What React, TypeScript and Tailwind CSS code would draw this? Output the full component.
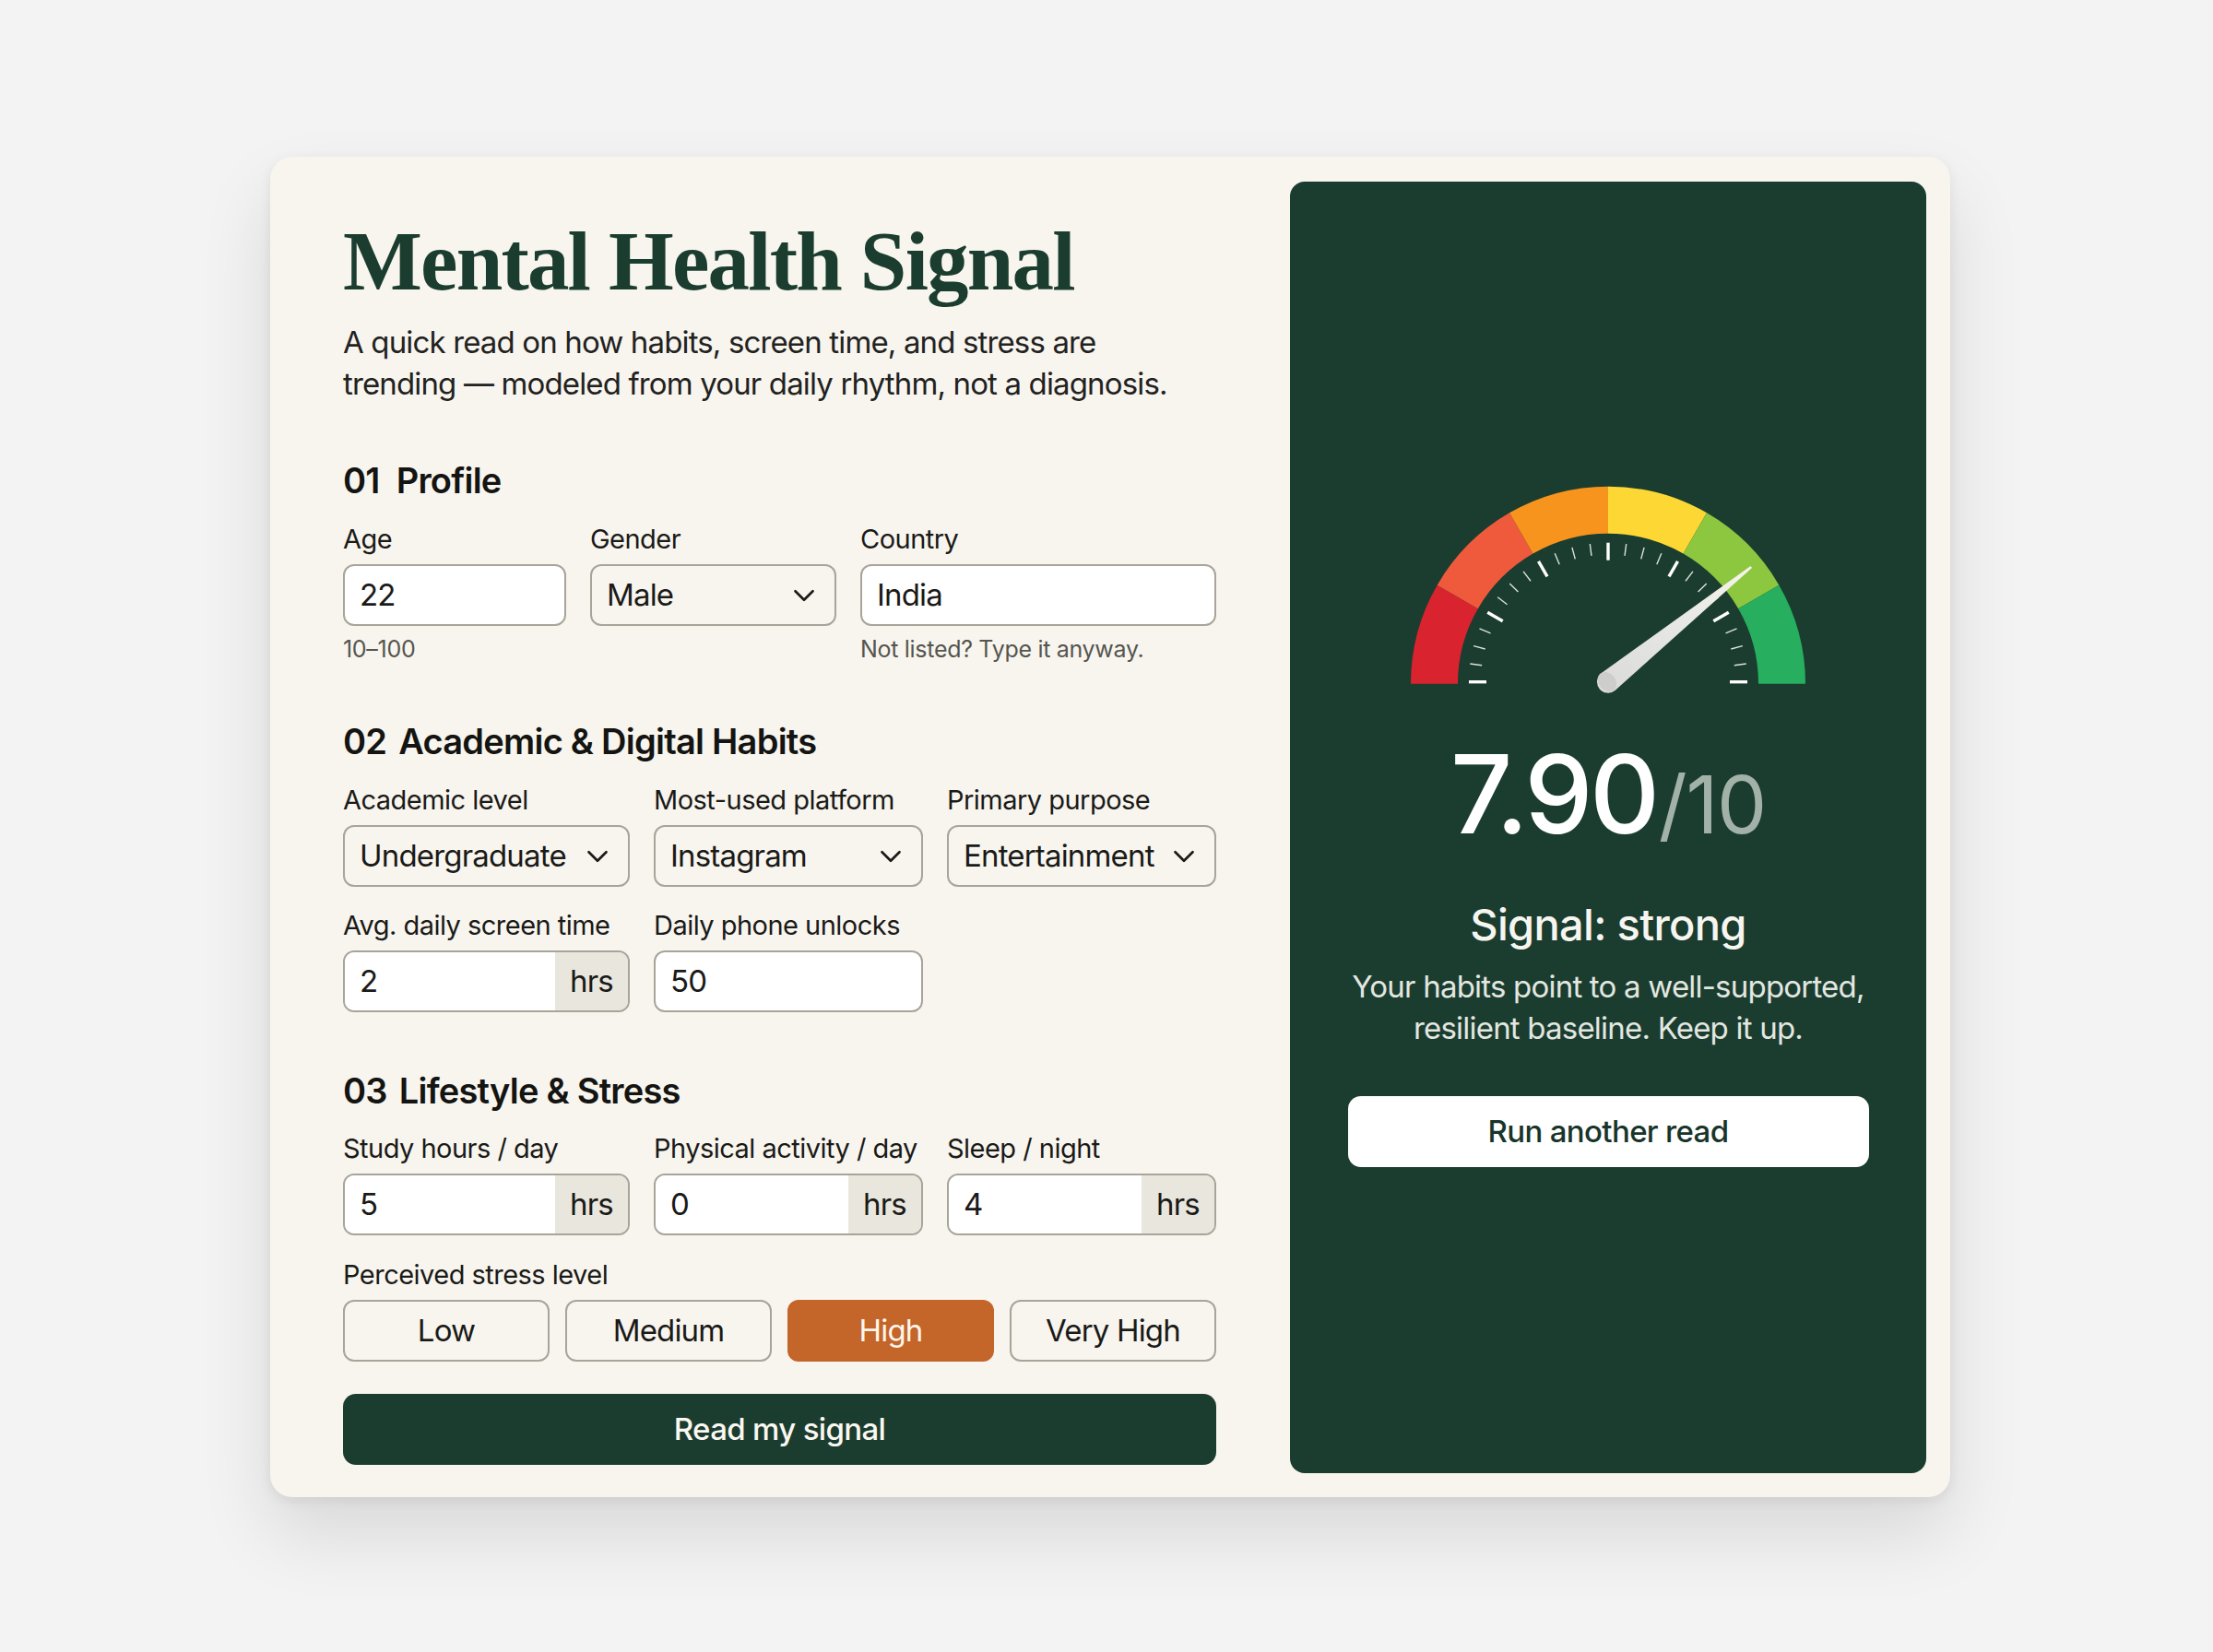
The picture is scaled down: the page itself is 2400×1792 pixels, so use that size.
import { ChevronDown } from "lucide-react";

const SEGMENTS = [
  { from: 180, to: 150, color: "#d9232e" },
  { from: 150, to: 120, color: "#ef5a3c" },
  { from: 120, to: 90, color: "#f7941e" },
  { from: 90, to: 60, color: "#fdd835" },
  { from: 60, to: 30, color: "#8dc63f" },
  { from: 30, to: 0, color: "#27ae5f" },
];

const CX = 264;
const CY = 242.7;
const TICK_CY = 240.7;

function pt(angle: number, r: number, cy = CY) {
  const a = (angle * Math.PI) / 180;
  return { x: CX + r * Math.cos(a), y: cy - r * Math.sin(a) };
}

function arcPath(from: number, to: number, outer: number, inner: number) {
  const a = pt(from, outer);
  const b = pt(to, outer);
  const c = pt(to, inner);
  const d = pt(from, inner);
  return `M${a.x} ${a.y}A${outer} ${outer} 0 0 1 ${b.x} ${b.y}L${c.x} ${c.y}A${inner} ${inner} 0 0 0 ${d.x} ${d.y}Z`;
}

function Gauge() {
  const ticks = [];
  for (let i = 0; i <= 24; i++) {
    const angle = 180 - i * 7.5;
    const major = i % 4 === 0;
    const p1 = pt(angle, 151, TICK_CY);
    const p2 = pt(angle, major ? 132 : 138, TICK_CY);
    ticks.push(
      <line
        key={i}
        x1={p1.x}
        y1={p1.y}
        x2={p2.x}
        y2={p2.y}
        stroke="#ffffff"
        strokeWidth={major ? 3.4 : 1.4}
        opacity={major ? 1 : 0.85}
      />,
    );
  }

  return (
    <svg width="520" height="280" viewBox="0 0 520 280" className="-ml-[8px] block">
      <defs>
        <linearGradient id="needle" x1="0" y1="1" x2="1" y2="0">
          <stop offset="0" stopColor="#dadad8" />
          <stop offset="0.6" stopColor="#e8e8e6" />
          <stop offset="1" stopColor="#f6f6ea" />
        </linearGradient>
      </defs>
      {SEGMENTS.map((s) => (
        <path key={s.from} d={arcPath(s.from, s.to, 214, 163)} fill={s.color} />
      ))}
      {ticks}
      {/* needle */}
      <path d="M256.5 231.3L418.5 115.1L420 116.9L271.5 250.06A12 12 0 0 1 256.5 231.3Z" fill="url(#needle)" />
      <ellipse cx="263" cy="240.5" rx="9" ry="11.5" transform="rotate(-38.8 263 240.5)" fill="#cdcdcb" />
    </svg>
  );
}

function Label({ children }: { children: React.ReactNode }) {
  return <div className="mb-2 h-[38px] text-[29px] leading-[38px] whitespace-nowrap tracking-[-0.018em] text-[#1a1a18]">{children}</div>;
}

function TextBox({ value }: { value: string }) {
  return (
    <div className="flex h-[67px] items-center rounded-xl border-2 border-[#a8a499] bg-white px-[16px] text-[33px] tracking-[-0.025em] text-[#1a1a18]">
      {value}
    </div>
  );
}

function SelectBox({ value }: { value: string }) {
  return (
    <div className="flex h-[67px] items-center justify-between rounded-xl border-2 border-[#a8a499] bg-[#f8f5ee] pl-[16px] pr-[14px] text-[33px] tracking-[-0.025em] whitespace-nowrap text-[#1a1a18]">
      {value}
      <ChevronDown size={38} strokeWidth={1.7} />
    </div>
  );
}

function HrsBox({ value }: { value: string }) {
  return (
    <div className="flex h-[67px] overflow-hidden rounded-xl border-2 border-[#a8a499] text-[33px] tracking-[-0.025em] text-[#1a1a18]">
      <div className="flex flex-1 items-center bg-white px-[16px]">{value}</div>
      <div className="flex w-[79px] items-center justify-center bg-[#e9e6dd]">hrs</div>
    </div>
  );
}

function Heading({ num, gap, title, className }: { num: string; gap: string; title: string; className: string }) {
  return (
    <h2 className={`h-[44px] text-[38px] leading-[44px] font-semibold tracking-[-0.02em] text-[#141412] ${className}`}>
      <span className={gap}>{num}</span>
      {title}
    </h2>
  );
}

function StressButton({ label, active }: { label: string; active?: boolean }) {
  return (
    <button
      className={
        active
          ? "h-[67px] rounded-xl border-2 border-[#c4652a] bg-[#c4652a] text-[33px] tracking-[-0.025em] text-[#fdf6ec]"
          : "h-[67px] rounded-xl border-2 border-[#a8a499] bg-[#f8f5ee] text-[33px] tracking-[-0.025em] text-[#1a1a18]"
      }
    >
      {label}
    </button>
  );
}

export default function App() {
  return (
    <div className="min-h-[1792px] bg-[#f3f3f3] pt-[170px] pl-[293px] font-['Inter',sans-serif]">
      <div className="flex h-[1454px] w-[1822px] rounded-[24px] bg-[#f8f5ee] p-[26px] shadow-[0_4px_14px_rgba(0,0,0,0.07),0_40px_80px_rgba(0,0,0,0.11)]">
        <div className="ml-[53px] w-[947px]">
          <h1 className="mt-[38px] h-[100px] font-['Liberation_Serif',serif] text-[91px] leading-[100px] font-bold tracking-[-0.02em] whitespace-nowrap text-[#1b3d2f]">
            Mental Health Signal
          </h1>
          <p className="mt-[15px] text-[33px] leading-[45px] tracking-[-0.026em] text-[#22221f]">
            A quick read on how habits, screen time, and stress are
            <br />
            trending — modeled from your daily rhythm, not a diagnosis.
          </p>

          <Heading className="mt-[60px]" num="01" gap="mr-[18px]" title="Profile" />
          <div className="mt-[23px] grid grid-cols-[242px_267px_386px] gap-x-[26px]">
            <div>
              <Label>Age</Label>
              <TextBox value="22" />
              <div className="mt-[7px] h-[36px] text-[25px] leading-[36px] tracking-[-0.012em] text-[#55554f]">10–100</div>
            </div>
            <div>
              <Label>Gender</Label>
              <SelectBox value="Male" />
            </div>
            <div>
              <Label>Country</Label>
              <TextBox value="India" />
              <div className="mt-[7px] h-[36px] text-[25px] leading-[36px] tracking-[-0.012em] text-[#55554f]">Not listed? Type it anyway.</div>
            </div>
          </div>

          <Heading className="mt-[60px]" num="02" gap="mr-[13px]" title="Academic & Digital Habits" />
          <div className="mt-[23px] grid grid-cols-[311px_292px_292px] gap-x-[26px] gap-y-[23px]">
            <div>
              <Label>Academic level</Label>
              <SelectBox value="Undergraduate" />
            </div>
            <div>
              <Label>Most-used platform</Label>
              <SelectBox value="Instagram" />
            </div>
            <div>
              <Label>Primary purpose</Label>
              <SelectBox value="Entertainment" />
            </div>
            <div>
              <Label>Avg. daily screen time</Label>
              <HrsBox value="2" />
            </div>
            <div>
              <Label>Daily phone unlocks</Label>
              <TextBox value="50" />
            </div>
          </div>

          <Heading className="mt-[63px]" num="03" gap="mr-[13px]" title="Lifestyle & Stress" />
          <div className="mt-[22px] grid grid-cols-[311px_292px_292px] gap-x-[26px]">
            <div>
              <Label>Study hours / day</Label>
              <HrsBox value="5" />
            </div>
            <div>
              <Label>Physical activity / day</Label>
              <HrsBox value="0" />
            </div>
            <div>
              <Label>Sleep / night</Label>
              <HrsBox value="4" />
            </div>
          </div>

          <div className="mt-[24px]">
            <Label>Perceived stress level</Label>
            <div className="grid grid-cols-4 gap-x-[17px]">
              <StressButton label="Low" />
              <StressButton label="Medium" />
              <StressButton label="High" active />
              <StressButton label="Very High" />
            </div>
          </div>

          <button className="mt-[35px] h-[77px] w-full rounded-[14px] bg-[#1b3d2f] text-[33px] font-medium tracking-[-0.02em] text-[#fbf8f1]">
            Read my signal
          </button>
        </div>

        <div className="mt-px ml-auto flex w-[690px] flex-col items-center rounded-[16px] bg-[#1b3d2f] pt-[302px]">
          <Gauge />
          <div className="mt-[17px] flex h-[130px] items-baseline leading-[130px]">
            <span className="text-[118px] font-medium tracking-[-0.03em] text-white">7.90</span>
            <span className="ml-[2px] text-[86px] tracking-[-0.015em] text-[#a3b2a9]">/10</span>
          </div>
          <div className="mt-[49px] h-[56px] text-[47px] leading-[56px] font-[550] tracking-[-0.015em] text-[#f7f5ef]">Signal: strong</div>
          <p className="mt-[17px] text-center text-[33px] leading-[45px] tracking-[-0.024em] text-[#e3e7e1]">
            Your habits point to a well-supported,
            <br />
            resilient baseline. Keep it up.
          </p>
          <button className="mt-[51px] h-[77px] w-[565px] rounded-[14px] bg-white text-[33px] font-medium tracking-[-0.02em] text-[#18352a]">
            Run another read
          </button>
        </div>
      </div>
    </div>
  );
}
